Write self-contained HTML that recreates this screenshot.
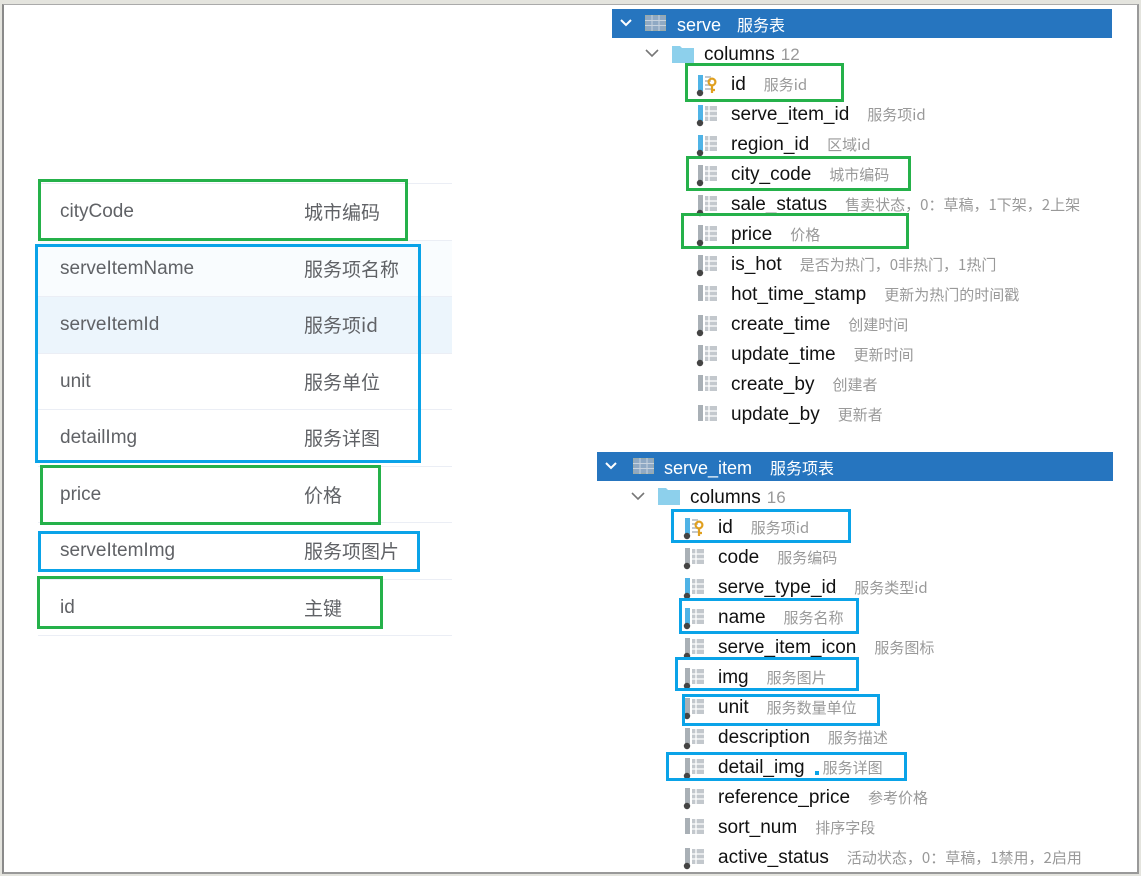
<!DOCTYPE html>
<html><head><meta charset="utf-8">
<style>
*{margin:0;padding:0;box-sizing:border-box}
body{width:1141px;height:876px;background:#e4e4de;position:relative;overflow:hidden;font-family:"Liberation Sans","Noto Sans CJK SC",sans-serif}
.frame{position:absolute;left:2px;top:4px;width:1137px;height:870px;background:#fff;border-left:2px solid #8a8a8a;border-top:1px solid #aaa;border-right:2px solid #999;border-bottom:2px solid #999}
.a{position:absolute}
.row{position:absolute;left:38px;width:414px;height:57px;border-top:1px solid #ebeef5;color:#606266;font-size:19px}
.row .k{position:absolute;left:22px;top:15px;line-height:26px;height:26px}
.row .v{position:absolute;left:266px;top:15px;line-height:26px;height:26px;font-family:"Noto Sans CJK SC",sans-serif;font-size:19px;display:block;overflow:hidden}
.g{position:absolute;border:3px solid #25b14a}
.b{position:absolute;border:3px solid #0aa3e8}
.hdr{position:absolute;height:29px;background:#2675bf;color:#fff;font-size:18px}
.t{position:absolute;font-size:19px;color:#111;white-space:nowrap;line-height:22px}
.t small{font-size:15px;color:#999;margin-left:18px;font-family:"Noto Sans CJK SC",sans-serif;line-height:22px}
.ic{position:absolute;width:24px;height:24px}
</style></head><body>
<div class="frame"></div>

<div class="row" style="top:183px"><span class="k">cityCode</span><span class="v">城市编码</span></div>
<div class="row" style="top:240px;background:#f9fcfe"><span class="k">serveItemName</span><span class="v">服务项名称</span></div>
<div class="row" style="top:296px;background:#ecf5fc"><span class="k">serveItemId</span><span class="v">服务项id</span></div>
<div class="row" style="top:353px"><span class="k">unit</span><span class="v">服务单位</span></div>
<div class="row" style="top:409px"><span class="k">detailImg</span><span class="v">服务详图</span></div>
<div class="row" style="top:466px"><span class="k">price</span><span class="v">价格</span></div>
<div class="row" style="top:522px"><span class="k">serveItemImg</span><span class="v">服务项图片</span></div>
<div class="row" style="top:579px;border-bottom:1px solid #ebeef5"><span class="k">id</span><span class="v">主键</span></div>

<div class="g" style="left:38px;top:179px;width:370px;height:62px"></div>
<div class="b" style="left:35px;top:244px;width:386px;height:219px"></div>
<div class="g" style="left:40px;top:465px;width:341px;height:60px"></div>
<div class="b" style="left:38px;top:531px;width:382px;height:41px"></div>
<div class="g" style="left:37px;top:576px;width:346px;height:53px"></div>

<div class="hdr" style="left:612px;top:9px;width:500px">
 <svg class="a" style="left:8px;top:8px" width="12" height="12"><path d="M1 3 L6 8 L11 3" stroke="#fff" stroke-width="2" fill="none"/></svg>
 <svg class="a" style="left:33px;top:6px" width="22" height="17"><rect x="0.5" y="0.5" width="20" height="15" fill="#8fa9c4" stroke="#9aa" /><path d="M0 5.5H21M0 10.5H21M7 0V16M14 0V16" stroke="#c7d3df"/></svg>
 <span class="a" style="left:65px;top:3px">serve<span style="margin-left:16px;font-family:'Noto Sans CJK SC';font-size:16px">服务表</span></span>
</div>
<svg class="a" style="left:645px;top:47px" width="14" height="12"><path d="M1 3 L7 9 L13 3" stroke="#777" stroke-width="1.6" fill="none"/></svg>
<svg class="a" style="left:672px;top:45px" width="22" height="18"><path d="M0 1h8l2 2h12v15H0z" fill="#8dd0ec"/></svg>
<div class="t" style="left:704px;top:44px">columns<span style="color:#999;margin-left:6px;font-size:17px">12</span></div>

<div class="hdr" style="left:597px;top:452px;width:516px">
 <svg class="a" style="left:8px;top:8px" width="12" height="12"><path d="M1 3 L6 8 L11 3" stroke="#fff" stroke-width="2" fill="none"/></svg>
 <svg class="a" style="left:36px;top:6px" width="22" height="17"><rect x="0.5" y="0.5" width="20" height="15" fill="#8fa9c4" stroke="#9aa"/><path d="M0 5.5H21M0 10.5H21M7 0V16M14 0V16" stroke="#c7d3df"/></svg>
 <span class="a" style="left:67px;top:3px">serve_item<span style="margin-left:18px;font-family:'Noto Sans CJK SC';font-size:16px">服务项表</span></span>
</div>
<svg class="a" style="left:631px;top:490px" width="14" height="12"><path d="M1 3 L7 9 L13 3" stroke="#777" stroke-width="1.6" fill="none"/></svg>
<svg class="a" style="left:658px;top:487px" width="22" height="18"><path d="M0 1h8l2 2h12v15H0z" fill="#8dd0ec"/></svg>
<div class="t" style="left:690px;top:487px">columns<span style="color:#999;margin-left:6px;font-size:17px">16</span></div>

<div id="gen"></div>

<div class="g" style="left:685px;top:63px;width:159px;height:39px"></div>
<div class="g" style="left:686px;top:156px;width:225px;height:35px"></div>
<div class="g" style="left:681px;top:213px;width:228px;height:36px"></div>

<div class="b" style="left:671px;top:509px;width:180px;height:34px"></div>
<div class="b" style="left:679px;top:598px;width:180px;height:36px"></div>
<div class="b" style="left:675px;top:657px;width:184px;height:34px"></div>
<div class="b" style="left:682px;top:694px;width:198px;height:32px"></div>
<div class="b" style="left:666px;top:752px;width:241px;height:29px"></div>
<div class="a" style="left:815px;top:771px;width:4px;height:4px;background:#0aa3e8"></div>

<script>
function key(x,y){return '<svg class="ic" style="left:'+x+'px;top:'+y+'px" viewBox="0 0 24 24"><rect x="2" y="2" width="5" height="16" fill="#4fb3e6"/><path d="M9 4h6M9 8h6M9 12h6M9 16h6" stroke="#c4c8cc" stroke-width="2"/><circle cx="16" cy="9" r="3.4" fill="none" stroke="#e0a020" stroke-width="2.2"/><path d="M16 12v8M16 17h3" stroke="#e0a020" stroke-width="2.2"/><circle cx="4" cy="20" r="3.2" fill="#444"/></svg>';}
function icon(x,y,blue,dot){return '<svg class="ic" style="left:'+x+'px;top:'+y+'px" viewBox="0 0 24 24"><rect x="2" y="2" width="5" height="16" fill="'+(blue?'#4fb3e6':'#a9b0b6')+'"/><rect x="9" y="3" width="12" height="15" fill="#c3c8cd"/><path d="M9 8h12M9 13h12M13 3v15" stroke="#fff" stroke-width="1.3"/>'+(dot?'<circle cx="4" cy="20" r="3.2" fill="#444"/>':'')+'</svg>';}
var s=key(696,73)+'<div class="t" style="left:731px;top:74px">id<small>服务id</small></div>';
var A=[["serve_item_id","服务项id",1,1],["region_id","区域id",1,1],["city_code","城市编码",0,1],["sale_status","售卖状态，0：草稿，1下架，2上架",0,1],["price","价格",0,1],["is_hot","是否为热门，0非热门，1热门",0,1],["hot_time_stamp","更新为热门的时间戳",0,0],["create_time","创建时间",0,1],["update_time","更新时间",0,1],["create_by","创建者",0,0],["update_by","更新者",0,0]];
A.forEach(function(r,i){var y=104+i*30;s+=icon(696,y-1,r[2],r[3])+'<div class="t" style="left:731px;top:'+y+'px">'+r[0]+'<small>'+r[1]+'</small></div>';});
var B=[["id","服务项id",1,1,1],["code","服务编码",0,1],["serve_type_id","服务类型id",1,1],["name","服务名称",1,1],["serve_item_icon","服务图标",0,1],["img","服务图片",0,1],["unit","服务数量单位",0,1],["description","服务描述",0,1],["detail_img","服务详图",0,1],["reference_price","参考价格",0,1],["sort_num","排序字段",0,0],["active_status","活动状态，0：草稿，1禁用，2启用",0,1]];
B.forEach(function(r,i){var y=517+i*30;
 s+= r[4]?key(683,y-1):icon(683,y-1,r[2],r[3]);
 s+='<div class="t" style="left:718px;top:'+y+'px">'+r[0]+'<small>'+r[1]+'</small></div>';});
document.getElementById('gen').innerHTML=s;
</script>
</body></html>
